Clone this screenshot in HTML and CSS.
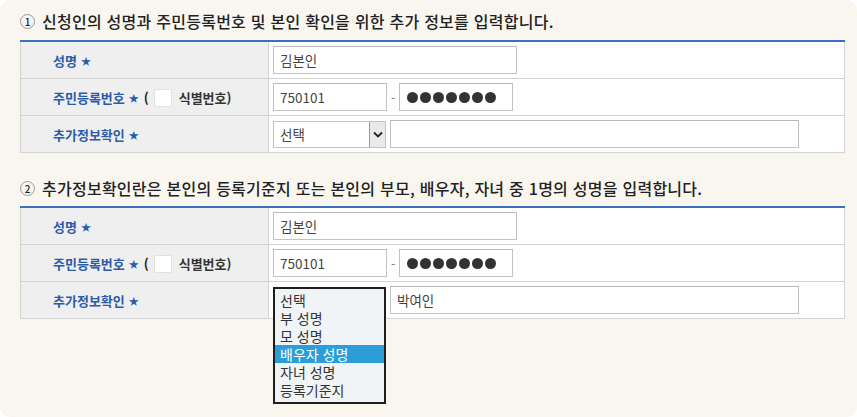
FILE: index.html
```html
<!DOCTYPE html>
<html lang="ko">
<head>
<meta charset="utf-8">
<link rel="stylesheet" href="styles.css">
</head>
<body>
<div class="page">
  <h2 class="step"><span class="num">1</span>신청인의 성명과 주민등록번호 및 본인 확인을 위한 추가 정보를 입력합니다.</h2>
  <table class="form">
    <tr>
      <th><span class="lbl">성명</span><span class="star">★</span></th>
      <td><div class="field name">김본인</div></td>
    </tr>
    <tr>
      <th><span class="lbl">주민등록번호</span><span class="star">★</span><span class="paren">(</span><span class="chk"></span><span class="dark">식별번호)</span></th>
      <td><div class="rrn"><div class="field rrn1">750101</div><span class="dash">-</span><div class="field rrn2"><i></i><i></i><i></i><i></i><i></i><i></i><i></i></div></div></td>
    </tr>
    <tr>
      <th><span class="lbl">추가정보확인</span><span class="star">★</span></th>
      <td><div class="extra"><div class="select"><span class="sel-text">선택</span><span class="arrow"><svg width="10" height="7" viewBox="0 0 10 7"><path d="M1 1.5 L5 5.5 L9 1.5" fill="none" stroke="#222" stroke-width="1.8"/></svg></span></div><div class="field wide"></div></div></td>
    </tr>
  </table>

  <h2 class="step second"><span class="num">2</span>추가정보확인란은 본인의 등록기준지 또는 본인의 부모, 배우자, 자녀 중 1명의 성명을 입력합니다.</h2>
  <table class="form">
    <tr>
      <th><span class="lbl">성명</span><span class="star">★</span></th>
      <td><div class="field name">김본인</div></td>
    </tr>
    <tr>
      <th><span class="lbl">주민등록번호</span><span class="star">★</span><span class="paren">(</span><span class="chk"></span><span class="dark">식별번호)</span></th>
      <td><div class="rrn"><div class="field rrn1">750101</div><span class="dash">-</span><div class="field rrn2"><i></i><i></i><i></i><i></i><i></i><i></i><i></i></div></div></td>
    </tr>
    <tr>
      <th><span class="lbl">추가정보확인</span><span class="star">★</span></th>
      <td><div class="extra"><div class="select-wrap"><ul class="listbox"><li>선택</li><li>부 성명</li><li>모 성명</li><li class="on">배우자 성명</li><li>자녀 성명</li><li>등록기준지</li></ul></div><div class="field wide">박여인</div></div></td>
    </tr>
  </table>
</div>
</body>
</html>
```
FILE: styles.css
```css
html, body {
  margin: 0;
  padding: 0;
  background: #ffffff;
}
body {
  font-family: "Noto Sans CJK KR", "Noto Sans", sans-serif;
  color: #222;
}
.page {
  width: 857px;
  height: 417px;
  box-sizing: border-box;
  background: #f8f6ef;
  border-radius: 10px;
  padding: 10px 12px 0 20px;
}
.step {
  margin: 0;
  height: 22px;
  display: flex;
  align-items: center;
  font-size: 16px;
  font-weight: 500;
  color: #222;
  letter-spacing: 0.25px;
  margin-bottom: 8px;
}
.step.second {
  margin-top: 24px;
  margin-bottom: 7px;
}
.num {
  width: 13px;
  height: 13px;
  border: 1px solid #9a9a9a;
  border-radius: 50%;
  background: #f4f4f4;
  font-size: 10px;
  line-height: 13px;
  text-align: center;
  font-weight: 500;
  letter-spacing: 0;
  color: #222;
  margin-right: 7px;
  margin-top: 1px;
  flex: none;
}
.form {
  width: 825px;
  border-collapse: collapse;
  border-top: 2px solid #3c70bd;
  background: #fff;
}
.form th, .form td {
  border: 1px solid #d3d3d3;
  height: 36px;
  padding: 0;
}
.form tr:first-child th, .form tr:first-child td {
  border-top: none;
}
.form th {
  width: 215px;
  background: #efefef;
  text-align: left;
  padding-left: 32px;
  font-size: 13px;
  font-weight: 700;
  white-space: nowrap;
}
.lbl {
  color: #2c5ca8;
}
.star {
  color: #2c5ca8;
  font-size: 10px;
  margin-left: 4px;
  vertical-align: 1px;
}
.paren {
  color: #222;
  margin-left: 5px;
}
.chk {
  display: inline-block;
  width: 16px;
  height: 16px;
  background: #fff;
  border: 1px solid #e2e2e2;
  vertical-align: -4px;
  margin: 0 7px 0 5px;
}
.dark {
  color: #333;
}
.form td {
  padding-left: 4px;
}
.field {
  box-sizing: border-box;
  height: 28px;
  border: 1px solid #c2c2c2;
  border-top-color: #b8b8b8;
  background: #fff;
  font-size: 13.5px;
  color: #444;
  padding-left: 6px;
  display: flex;
  align-items: center;
}
.name {
  width: 244px;
}
.rrn {
  display: flex;
  align-items: center;
}
.rrn1 {
  width: 114px;
}
.dash {
  width: 12px;
  text-align: center;
  color: #777;
  font-size: 12px;
}
.rrn2 {
  width: 114px;
  padding-left: 7px;
  gap: 2px;
}
.rrn2 i {
  display: block;
  width: 11px;
  height: 11px;
  border-radius: 50%;
  background: #333;
}
.extra {
  display: flex;
  align-items: center;
  gap: 4px;
}
.select {
  box-sizing: border-box;
  width: 113px;
  height: 27px;
  border: 1px solid #c2c2c2;
  background: #fff;
  display: flex;
  align-items: center;
  font-size: 13.5px;
  color: #444;
}
.sel-text {
  flex: 1;
  padding-left: 6px;
}
.arrow {
  width: 15px;
  height: 25px;
  background: #e9e9e9;
  border-left: 1px solid #9c9c9c;
  display: flex;
  align-items: center;
  justify-content: center;
}
.wide {
  width: 409px;
}
.select-wrap {
  position: relative;
  width: 113px;
  height: 27px;
}
.listbox {
  position: absolute;
  left: 0;
  top: 0;
  margin: 0;
  box-sizing: border-box;
  width: 113px;
  padding: 2px 0 3px 0;
  list-style: none;
  border: 2px solid #1e1e1e;
  background: #f1f4f6;
  z-index: 2;
}
.listbox li {
  height: 18px;
  line-height: 18px;
  font-size: 14px;
  color: #333;
  padding-left: 5px;
  white-space: nowrap;
  overflow: hidden;
}
.listbox li.on {
  background: #2b9ed8;
  color: #fff;
}
```
